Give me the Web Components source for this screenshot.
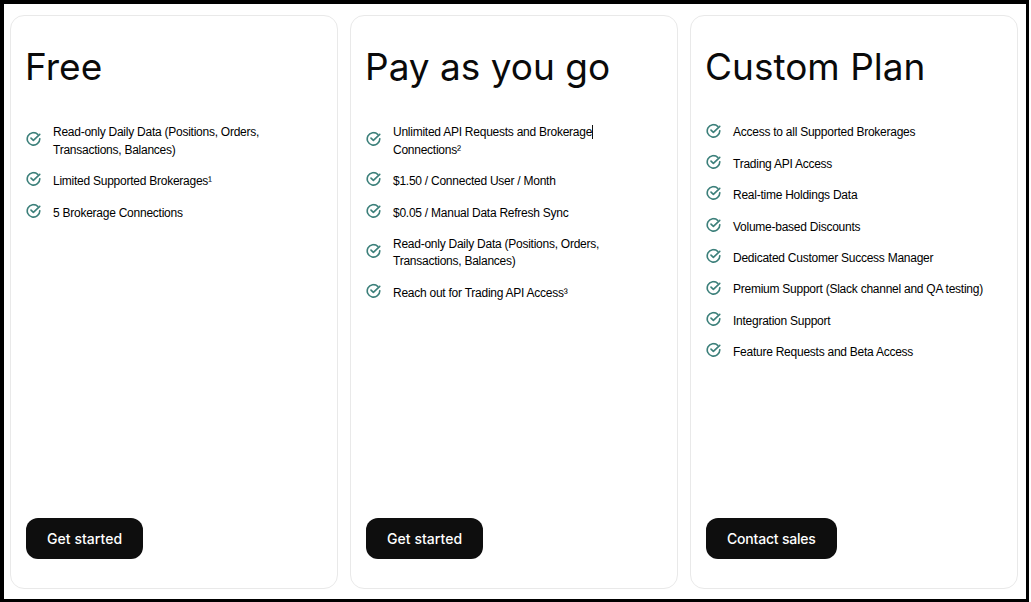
<!doctype html>
<html><head><meta charset="utf-8">
<style>
html,body{margin:0;padding:0;height:100%;background:#fff}
body{font-family:"Liberation Sans",Arial,sans-serif;color:#0b0b0b}
</style></head>
<body>
<pricing-page>
<plan-card heading="Free" cta="Get started">
<plan-item>Read-only Daily Data (Positions, Orders, Transactions, Balances)</plan-item>
<plan-item>Limited Supported Brokerages¹</plan-item>
<plan-item>5 Brokerage Connections</plan-item>
</plan-card>
<plan-card heading="Pay as you go" cta="Get started">
<plan-item>Unlimited API Requests and Brokerage<text-caret></text-caret> Connections²</plan-item>
<plan-item>$1.50 / Connected User / Month</plan-item>
<plan-item>$0.05 / Manual Data Refresh Sync</plan-item>
<plan-item>Read-only Daily Data (Positions, Orders, Transactions, Balances)</plan-item>
<plan-item>Reach out for Trading API Access³</plan-item>
</plan-card>
<plan-card heading="Custom Plan" cta="Contact sales" style="--cta-track:-.2px">
<plan-item>Access to all Supported Brokerages</plan-item>
<plan-item>Trading API Access</plan-item>
<plan-item>Real-time Holdings Data</plan-item>
<plan-item>Volume-based Discounts</plan-item>
<plan-item>Dedicated Customer Success Manager</plan-item>
<plan-item>Premium Support (Slack channel and QA testing)</plan-item>
<plan-item>Integration Support</plan-item>
<plan-item>Feature Requests and Beta Access</plan-item>
</plan-card>
</pricing-page>
<script>
class PricingPage extends HTMLElement{constructor(){super();this.attachShadow({mode:'open'}).innerHTML=`<style>
:host{display:grid;grid-template-columns:repeat(3,328px);gap:12px;box-sizing:border-box;width:1029px;height:602px;border:solid #000;border-width:4px 3px 3px 4px;padding:11px 0 10px 6px}
</style><slot></slot>`}}
class PlanCard extends HTMLElement{constructor(){super();const r=this.attachShadow({mode:'open'});
r.innerHTML=`<style>
:host{display:flex;flex-direction:column;box-sizing:border-box;border:1px solid #e9e9e9;border-radius:14px;padding:0 15px 29px;background:#fff;min-width:0}
h2{margin:29px 0 0;font:400 37px/44px Inter,"Liberation Sans",sans-serif;margin-left:-1px;color:#0a0a0a}
ul{list-style:none;margin:35.3px 0 0;padding:0;display:flex;flex-direction:column;gap:14px;flex:1}
a{align-self:flex-start;display:block;background:#0e0e0e;color:#fff;border-radius:12px;padding:0 21px;font:500 14px/41px Inter,"Liberation Sans",sans-serif;letter-spacing:var(--cta-track,.05px)}
</style><h2></h2><ul><slot></slot></ul><a></a>`;
r.querySelector('h2').textContent=this.getAttribute('heading');r.querySelector('a').textContent=this.getAttribute('cta');}}
class PlanItem extends HTMLElement{constructor(){super();this.attachShadow({mode:'open'}).innerHTML=`<style>
:host{display:flex;align-items:center;gap:12px;font-size:12px;letter-spacing:-.25px;line-height:17.4px;color:#000}
svg{flex:none;width:15px;height:15px;transform:translateY(-2.5px)}
span{flex:1;min-width:0}
</style><svg viewBox="0 0 24 24" fill="none" stroke="#3d807b" stroke-width="2.6" stroke-linecap="round" stroke-linejoin="round"><path d="M22 11.5a10 10 0 1 1-3.2-7"/><path d="M8 10.5l3.8 3.8L22 4.5"/></svg><span><slot></slot></span>`}}
class TextCaret extends HTMLElement{constructor(){super();this.attachShadow({mode:'open'}).innerHTML=`<style>:host{display:inline-block;width:1px;height:14px;background:#111;vertical-align:-3px}</style>`}}
customElements.define('pricing-page',PricingPage);
customElements.define('plan-card',PlanCard);
customElements.define('plan-item',PlanItem);
customElements.define('text-caret',TextCaret);
</script>
</body></html>
